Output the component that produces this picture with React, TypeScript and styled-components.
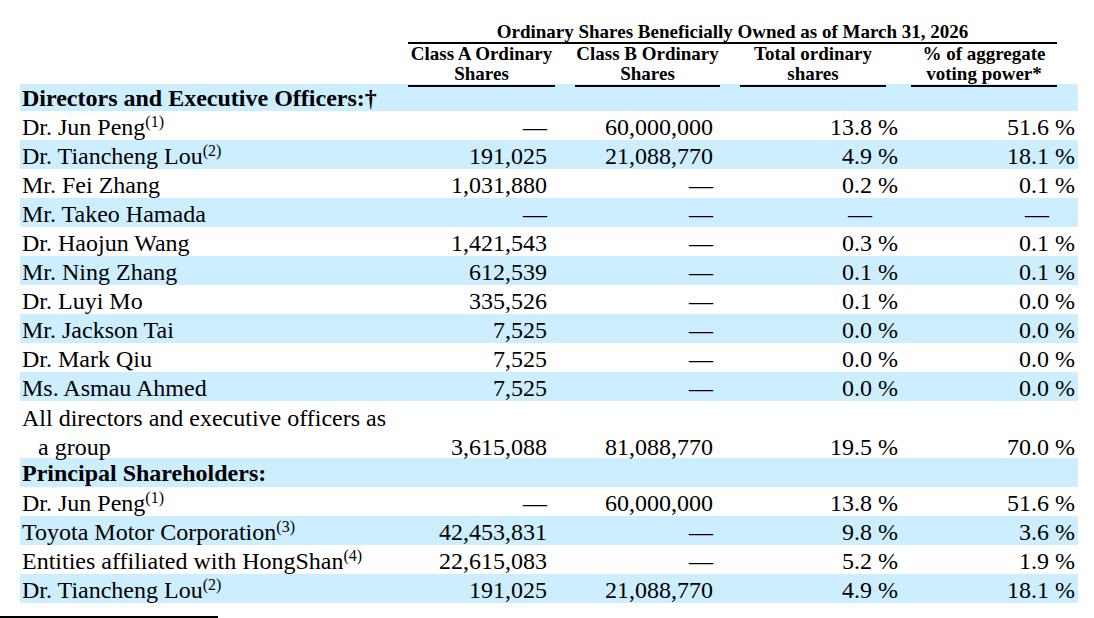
import React from 'react';
import styled, { createGlobalStyle } from 'styled-components';

const GlobalStyle = createGlobalStyle`
    body {
        margin: 0;
        background: #ffffff;
        color: #000000;
        font-family: 'Liberation Serif', 'Times New Roman', serif;
    }
`;

const COLUMNS = '388px 147px 20px 145px 20px 146px 25px 146px 21px';

interface IHolder {
    name: string;
    note?: number;
    classA: string;
    classB: string;
    total: string;
    voting: string;
}

const directors: IHolder[] = [
    { name: 'Dr. Jun Peng', note: 1, classA: '—', classB: '60,000,000', total: '13.8', voting: '51.6' },
    { name: 'Dr. Tiancheng Lou', note: 2, classA: '191,025', classB: '21,088,770', total: '4.9', voting: '18.1' },
    { name: 'Mr. Fei Zhang', classA: '1,031,880', classB: '—', total: '0.2', voting: '0.1' },
    { name: 'Mr. Takeo Hamada', classA: '—', classB: '—', total: '—', voting: '—' },
    { name: 'Dr. Haojun Wang', classA: '1,421,543', classB: '—', total: '0.3', voting: '0.1' },
    { name: 'Mr. Ning Zhang', classA: '612,539', classB: '—', total: '0.1', voting: '0.1' },
    { name: 'Dr. Luyi Mo', classA: '335,526', classB: '—', total: '0.1', voting: '0.0' },
    { name: 'Mr. Jackson Tai', classA: '7,525', classB: '—', total: '0.0', voting: '0.0' },
    { name: 'Dr. Mark Qiu', classA: '7,525', classB: '—', total: '0.0', voting: '0.0' },
    { name: 'Ms. Asmau Ahmed', classA: '7,525', classB: '—', total: '0.0', voting: '0.0' },
];

const principals: IHolder[] = [
    { name: 'Dr. Jun Peng', note: 1, classA: '—', classB: '60,000,000', total: '13.8', voting: '51.6' },
    { name: 'Toyota Motor Corporation', note: 3, classA: '42,453,831', classB: '—', total: '9.8', voting: '3.6' },
    { name: 'Entities affiliated with HongShan', note: 4, classA: '22,615,083', classB: '—', total: '5.2', voting: '1.9' },
    { name: 'Dr. Tiancheng Lou', note: 2, classA: '191,025', classB: '21,088,770', total: '4.9', voting: '18.1' },
];

// dash rows keep an invisible " %" so the dash lines up with the numbers
const Percent: React.FC<{ value: string }> = ({ value }) => (
    <>
        {value}
        <SPct $hidden={value === '—'}>&nbsp;%</SPct>
    </>
);

const HolderRow: React.FC<{ holder: IHolder; shaded: boolean }> = ({ holder, shaded }) => (
    <SRow $shaded={shaded}>
        <SLabel>
            {holder.name}
            {holder.note && <SNote>({holder.note})</SNote>}
        </SLabel>
        <SValueA>{holder.classA}</SValueA>
        <SValueB>{holder.classB}</SValueB>
        <SValueC>
            <Percent value={holder.total} />
        </SValueC>
        <SValueD>
            <Percent value={holder.voting} />
        </SValueD>
    </SRow>
);

const App: React.FC = () => {
    return (
        <SPage>
            <GlobalStyle />
            <STable>
                <SHeadRow $height={44}>
                    <SSpanHead>Ordinary Shares Beneficially Owned as of March 31, 2026</SSpanHead>
                </SHeadRow>
                <SHeadRow $height={40}>
                    <SColHead $col={2}>Class A Ordinary<br />Shares</SColHead>
                    <SColHead $col={4}>Class B Ordinary<br />Shares</SColHead>
                    <SColHead $col={6}>Total ordinary<br />shares</SColHead>
                    <SColHead $col={8}>% of aggregate<br />voting power*</SColHead>
                </SHeadRow>
                <SSection $height={27}>Directors and Executive Officers:†</SSection>
                {directors.map((d, i) => (
                    <HolderRow key={d.name} holder={d} shaded={i % 2 === 1} />
                ))}
                <STallRow>
                    <SLabel $hanging>
                        All directors and executive officers as
                        <br />
                        a group
                    </SLabel>
                    <SValueA>3,615,088</SValueA>
                    <SValueB>81,088,770</SValueB>
                    <SValueC>
                        <Percent value='19.5' />
                    </SValueC>
                    <SValueD>
                        <Percent value='70.0' />
                    </SValueD>
                </STallRow>
                <SSection $height={29}>Principal Shareholders:</SSection>
                {principals.map((p, i) => (
                    <HolderRow key={p.name + i} holder={p} shaded={i % 2 === 1} />
                ))}
            </STable>
            <SFootRule />
        </SPage>
    );
};

export default App;

const SPage = styled.div`
    width: 1094px;
`;

const STable = styled.div`
    margin-left: 20px;
    width: 1058px;
    font-size: 24px;
`;

const SHeadRow = styled.div<{ $height: number }>`
    display: grid;
    grid-template-columns: ${COLUMNS};
    height: ${p => p.$height}px;
    font-weight: bold;
    font-size: 19px;
    line-height: 20px;
`;

const SSpanHead = styled.div`
    grid-column: 2 / 9;
    align-self: end;
    text-align: center;
    border-bottom: 2px solid #000;
    white-space: nowrap;
`;

const SColHead = styled.div<{ $col: number }>`
    grid-column: ${p => p.$col};
    align-self: end;
    text-align: center;
    border-bottom: 2px solid #000;
    padding-bottom: 1px;
    white-space: nowrap;
`;

const SSection = styled.div<{ $height: number }>`
    height: ${p => p.$height}px;
    line-height: ${p => p.$height + 2}px;
    background: #cceeff;
    font-weight: bold;
    padding-left: 2px;
`;

const SRow = styled.div<{ $shaded: boolean }>`
    display: grid;
    grid-template-columns: ${COLUMNS};
    height: 29px;
    line-height: 33px;
    background: ${p => (p.$shaded ? '#cceeff' : 'transparent')};
    white-space: nowrap;
`;

const STallRow = styled.div`
    display: grid;
    grid-template-columns: ${COLUMNS};
    line-height: 28.5px;
    padding-top: 3px;
    height: 57px;
    box-sizing: border-box;
    align-items: end;
`;

const SLabel = styled.div<{ $hanging?: boolean }>`
    grid-column: 1;
    padding-left: ${p => (p.$hanging ? '18px' : '2px')};
    text-indent: ${p => (p.$hanging ? '-16px' : '0')};
    white-space: nowrap;
`;

const SNote = styled.sup`
    font-size: 16px;
    line-height: 0;
    vertical-align: 8px;
`;

const SValue = styled.div`
    text-align: right;
    white-space: nowrap;
`;

const SValueA = styled(SValue)`
    grid-column: 2;
    padding-right: 8px;
`;

const SValueB = styled(SValue)`
    grid-column: 4;
    padding-right: 7px;
`;

const SValueC = styled(SValue)`
    grid-column: 6 / 8;
    padding-right: 13px;
`;

const SValueD = styled(SValue)`
    grid-column: 8 / 10;
    padding-right: 3px;
`;

const SPct = styled.span<{ $hidden: boolean }>`
    visibility: ${p => (p.$hidden ? 'hidden' : 'visible')};
`;

const SFootRule = styled.div`
    margin-top: 13px;
    width: 218px;
    height: 2px;
    background: #000;
`;
